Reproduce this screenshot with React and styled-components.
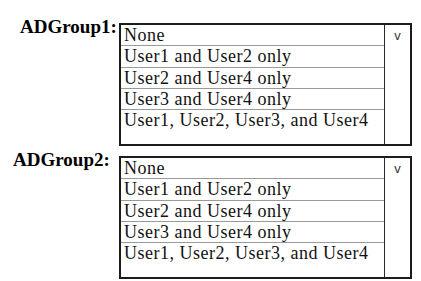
import React from 'react';
import styled, { createGlobalStyle } from 'styled-components';

const Global = createGlobalStyle`
  html, body {
    margin: 0;
    padding: 0;
    background: #fff;
  }
  body {
    font-family: "Liberation Serif", "Times New Roman", serif;
    color: #111;
  }
`

const Page = styled.div`
  width: 421px;
  height: 281px;
  padding-top: 17px;
  box-sizing: border-box;
  display: flex;
  flex-direction: column;
  gap: 4px;
  overflow: hidden;
`

const Group = styled.div`
  display: flex;
  align-items: flex-start;
`

const Label = styled.div`
  width: 119px;
  box-sizing: border-box;
  padding-left: ${p => p.$indent}px;
  font-family: "Liberation Serif", "Times New Roman", serif;
  font-size: 19px;
  line-height: 20px;
  font-weight: bold;
  color: #000;
  white-space: nowrap;
`

const Select = styled.div`
  margin-top: 6px;
  width: 293px;
  height: 123px;
  box-sizing: border-box;
  border: 2px solid #1c1c1c;
  display: grid;
  grid-template-columns: 1fr 25px;
`

const Options = styled.div`
  display: grid;
  grid-template-rows: 21px 22px 21px 21px 1fr;
  border-right: 1px solid #2a2a2a;
`

const Option = styled.div`
  border-bottom: ${p => (p.$last ? 'none' : '1px solid #9a9a9a')};
  padding-left: 3px;
  font-family: "Liberation Serif", "Times New Roman", serif;
  font-size: 18px;
  line-height: 20px;
  letter-spacing: 0.5px;
  color: #111;
  white-space: nowrap;
  overflow: hidden;
`

const Arrow = styled.div`
  padding-top: 3px;
  text-align: center;
  font-family: "Liberation Sans", Arial, sans-serif;
  font-size: 13px;
  line-height: 16px;
  color: #333;
`

const options = [
  'None',
  'User1 and User2 only',
  'User2 and User4 only',
  'User3 and User4 only',
  'User1, User2, User3, and User4',
]

const Dropdown = ({ label, indent }) => (
  <Group>
    <Label $indent={indent}>{label}</Label>
    <Select>
      <Options>
        {options.map((o, i) => (
          <Option key={o} $last={i === options.length - 1}>{o}</Option>
        ))}
      </Options>
      <Arrow>v</Arrow>
    </Select>
  </Group>
)

const App = () => {
  return (
    <Page>
      <Global />
      <Dropdown label="ADGroup1:" indent={20} />
      <Dropdown label="ADGroup2:" indent={13} />
    </Page>
  )
}

export default App;
